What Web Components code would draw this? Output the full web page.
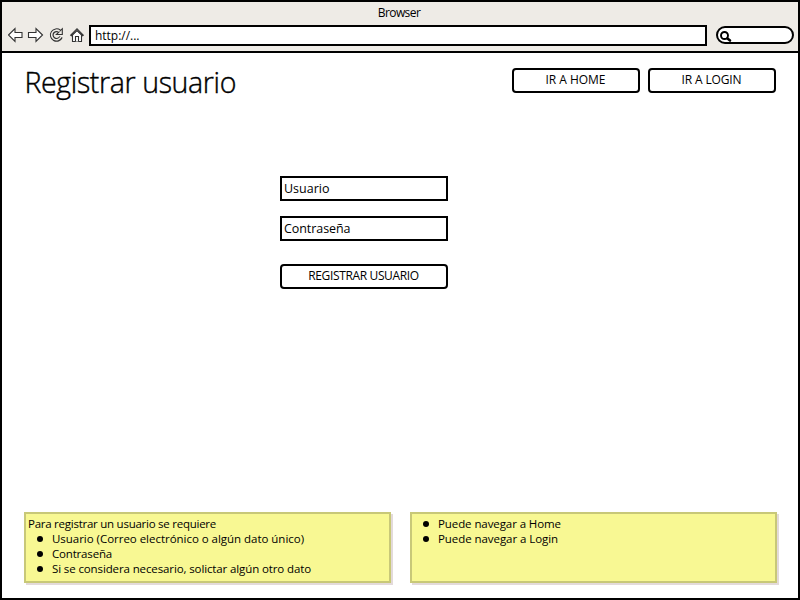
<!DOCTYPE html>
<html lang="es"><head><meta charset="utf-8"><title>Registrar usuario</title>
<style>
html,body{margin:0;width:800px;height:600px;overflow:hidden;background:#fff;color:#000;font-family:"Open Sans","Noto Sans",sans-serif;font-size:12px}
</style></head><body>
<browser-window caption="Browser" address="http://...">
  <page-header>
    <fit-text slot="title" w="211.5" size="28.5" weight="300">Registrar usuario</fit-text>
    <wire-button><fit-text w="60">IR A HOME</fit-text></wire-button>
    <wire-button><fit-text w="60">IR A LOGIN</fit-text></wire-button>
  </page-header>
  <register-form></register-form>
  <note-row>
    <sticky-note>
      <note-line><fit-text w="188" size="11.5">Para registrar un usuario se requiere</fit-text></note-line>
      <note-line bullet><fit-text w="252" size="11.5">Usuario (Correo electrónico o algún dato único)</fit-text></note-line>
      <note-line bullet><fit-text w="60" size="11.5">Contraseña</fit-text></note-line>
      <note-line bullet><fit-text w="259" size="11.5">Si se considera necesario, solictar algún otro dato</fit-text></note-line>
    </sticky-note>
    <sticky-note>
      <note-line bullet><fit-text w="123" size="11.5">Puede navegar a Home</fit-text></note-line>
      <note-line bullet><fit-text w="120" size="11.5">Puede navegar a Login</fit-text></note-line>
    </sticky-note>
  </note-row>
</browser-window>
<script>
const define = (name, html, ready) => customElements.define(name, class extends HTMLElement {
  connectedCallback() {
    if (this.shadowRoot) return;
    this.attachShadow({mode: 'open'}).innerHTML = '<style>:host{display:block;box-sizing:border-box}*{box-sizing:border-box}</style>' + (typeof html === 'function' ? html(this) : html);
    if (ready) ready(this);
  }
});

/* Text tracked so that its advance equals the "w" attribute. */
define('fit-text', el => `<style>:host{display:inline-block;white-space:pre;line-height:inherit;width:${el.getAttribute('w')}px;font-size:${el.getAttribute('size') || 12}px;font-weight:${el.getAttribute('weight') || 400}}span{display:inline-block}</style><span><slot></slot></span>`,
  el => {
    const s = el.shadowRoot.querySelector('span');
    const n = el.textContent.length;
    s.style.letterSpacing = ((+el.getAttribute('w') - s.getBoundingClientRect().width) / n) + 'px';
  });

define('wire-button', `<style>:host{display:flex;width:128px;height:25px;border:2px solid #000;border-radius:4px;background:#fff;justify-content:center;line-height:20px;padding-right:1px}</style><slot></slot>`);
define('wire-input', `<style>:host{height:25px;border:2px solid #000;background:#fff;padding-left:2px;line-height:21px}</style><slot></slot>`);

define('nav-icons', `<style>:host{width:80px;height:20px}svg{display:block}</style>
<svg width="80" height="20" viewBox="0 0 80 20" fill="#fff" stroke="#333" stroke-width="1.1">
<path d="M.5 10 7 3.500V7.500H14V12.500H7V16.500Z"/>
<path d="M34.500 10 28 3.500V7.500H20.500V12.500H28V16.500Z"/>
<path fill="none" stroke-width="3.800" d="M53 12A4.800 4.800 0 1 1 51.600 6.300"/>
<path fill="#eeebe6" d="M54.300 3.700V9.500H48.400Z"/>
<path fill="none" stroke="#eeebe6" stroke-width="1.600" d="M52.800 12A4.800 4.800 0 1 1 51.600 6.300"/>
<path d="M64.500 9.500V16.500H73.500V9.500L69 5Z"/><path d="M62.700 10.200 69 3.700 75.300 10.200 74.500 10.800 69 5.500 63.500 10.800Z"/><path d="M67.500 16.500V11.500H70.500V16.500"/>
</svg>`);

define('search-box', `<style>:host{width:78px;height:18px;border:2px solid #000;border-radius:9px;background:#fff;padding:2px 0 0 1px}svg{display:block}</style>
<svg width="14" height="13" fill="none" stroke="#000"><circle cx="5.500" cy="5.500" r="3.500" stroke-width="1.900"/><path stroke-width="2.600" stroke-linecap="round" d="M8.500 8.500 11 10.500"/></svg>`);

define('browser-window', el => `<style>
:host{display:flex;flex-direction:column;width:800px;height:600px;border:2px solid #000;background:#fff}
header{height:51px;background:#eeebe6;border-bottom:2px solid #000;flex:none}
.cap{height:21px;line-height:22px;text-align:center;padding-right:2px}
.bar{display:flex;align-items:center;padding:2px 4px 0 6px;height:22px}
.url{width:618px;height:21px;border:2px solid #000;background:#fff;padding-left:4px;line-height:18px;margin:0 9px 0 1px}
main{flex:1;display:flex;flex-direction:column;padding:15px 21px 15px 22px}
</style>
<header><div class="cap"><fit-text w="42.500">${el.getAttribute('caption')}</fit-text></div>
<div class="bar"><nav-icons></nav-icons><div class="url"><fit-text w="44.500">${el.getAttribute('address')}</fit-text></div><search-box></search-box></div></header>
<main><slot></slot></main>`);

define('page-header', `<style>:host{display:flex;gap:8px;height:40px;padding-right:1px;align-items:flex-start}.t{flex:1;line-height:28px;-webkit-text-stroke:.4px #000;padding-left:.5px}</style><div class="t"><slot name="title"></slot></div><slot></slot>`);
define('register-form', `<style>:host{display:flex;flex-direction:column;width:168px;margin:68px 0 0 256px}wire-input+wire-input{margin-top:15px}wire-button{width:168px;margin-top:23px}</style>
<wire-input><fit-text w="45.500" size="12.5">Usuario</fit-text></wire-input><wire-input><fit-text w="66.500" size="12.5">Contraseña</fit-text></wire-input><wire-button><fit-text w="110.500">REGISTRAR USUARIO</fit-text></wire-button>`);
define('note-row', `<style>:host{display:flex;gap:19px;margin-top:auto}</style><slot></slot>`);
define('sticky-note', `<style>:host{width:367px;height:71px;border:2px solid #c8c878;background:#f8f893;box-shadow:2px 2px 0 #e3dada;padding:2px}</style><slot></slot>`);
define('note-line', el => `<style>:host{display:flex;height:15px;line-height:15px;align-items:center}i{width:6px;height:6px;border-radius:3px;background:#000;margin:1px 9px 0 9px}</style>${el.hasAttribute('bullet') ? '<i></i>' : ''}<slot></slot>`);
</script>
</body></html>
